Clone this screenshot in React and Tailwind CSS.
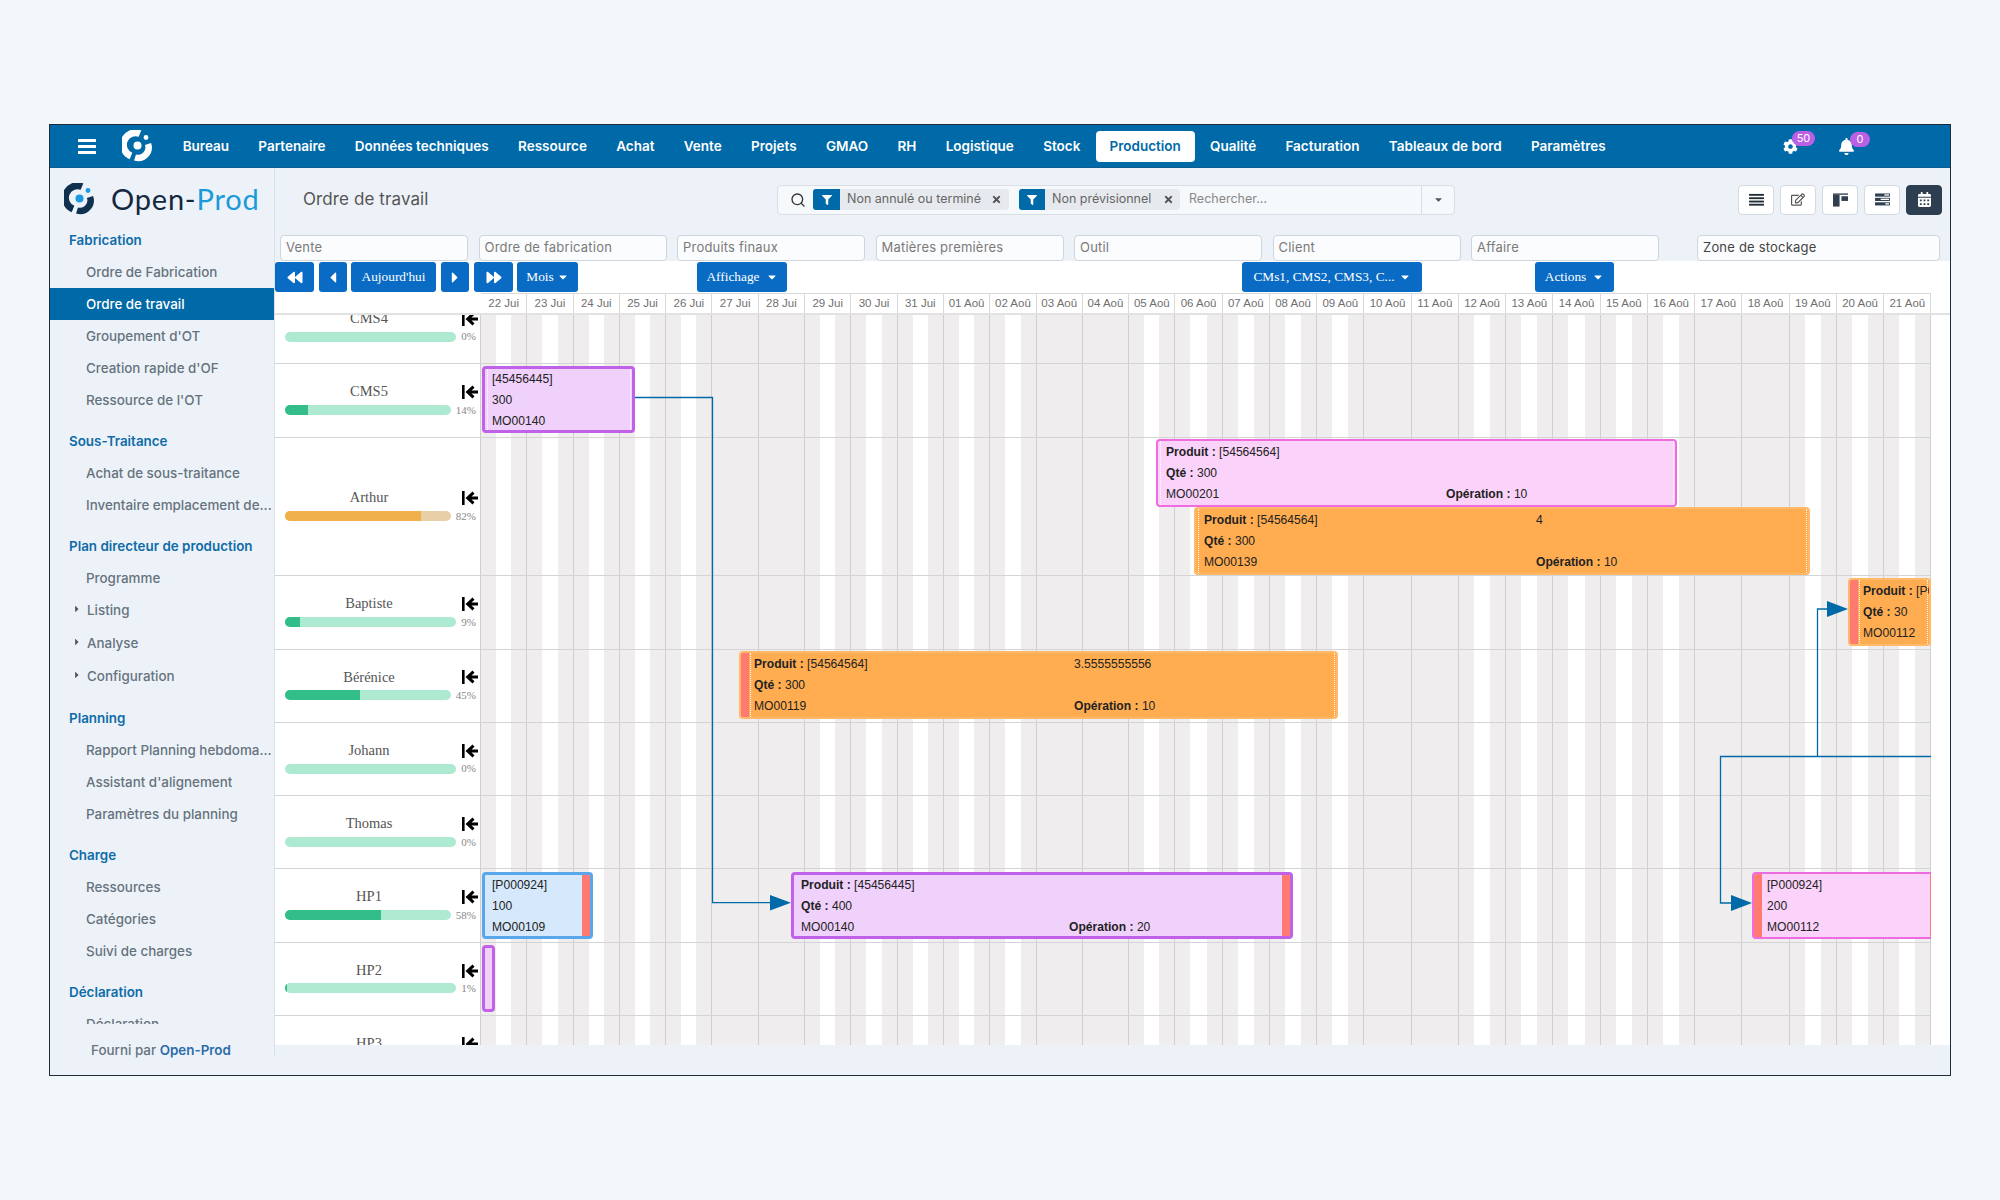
import { FaBackward, FaBell, FaCalendarAlt, FaCaretDown, FaCaretLeft, FaCaretRight, FaCog, FaFilter, FaForward, FaRegEdit, FaTimes } from "react-icons/fa";
import { Search } from "lucide-react";

const NAV = [
  "Bureau", "Partenaire", "Données techniques", "Ressource", "Achat", "Vente", "Projets", "GMAO", "RH",
  "Logistique", "Stock", "Production", "Qualité", "Facturation", "Tableaux de bord", "Paramètres",
];

const MENU = [
  { title: "Fabrication", items: ["Ordre de Fabrication", "Ordre de travail", "Groupement d'OT", "Creation rapide d'OF", "Ressource de l'OT"] },
  { title: "Sous-Traitance", items: ["Achat de sous-traitance", "Inventaire emplacement de..."] },
  { title: "Plan directeur de production", items: ["Programme", ">Listing", ">Analyse", ">Configuration"] },
  { title: "Planning", items: ["Rapport Planning hebdoma...", "Assistant d'alignement", "Paramètres du planning"] },
  { title: "Charge", items: ["Ressources", "Catégories", "Suivi de charges"] },
  { title: "Déclaration", items: ["Déclaration"] },
];

const FILTERS = ["Vente", "Ordre de fabrication", "Produits finaux", "Matières premières", "Outil", "Client", "Affaire"];

const DAYS = [
  "22 Jui", "23 Jui", "24 Jui", "25 Jui", "26 Jui", "27 Jui", "28 Jui", "29 Jui", "30 Jui", "31 Jui",
  "01 Aoû", "02 Aoû", "03 Aoû", "04 Aoû", "05 Aoû", "06 Aoû", "07 Aoû", "08 Aoû", "09 Aoû", "10 Aoû", "11 Aoû",
  "12 Aoû", "13 Aoû", "14 Aoû", "15 Aoû", "16 Aoû", "17 Aoû", "18 Aoû", "19 Aoû", "20 Aoû", "21 Aoû",
];
const WEEKEND = [5, 6, 12, 13, 19, 20, 26, 27];
const DAY_GRID = "grid grid-cols-[repeat(15,46.3px)_repeat(16,47.25px)]";

const ROWS = [
  { name: "CMS4", pct: 0 },
  { name: "CMS5", pct: 14 },
  { name: "Arthur", pct: 82, tall: true, warn: true },
  { name: "Baptiste", pct: 9 },
  { name: "Bérénice", pct: 45 },
  { name: "Johann", pct: 0 },
  { name: "Thomas", pct: 0 },
  { name: "HP1", pct: 58 },
  { name: "HP2", pct: 1 },
  { name: "HP3", pct: 0 },
];

const PURPLE = "bg-[#f0d1fb] border-[3px] border-[#c160e8]";
const PINK = "bg-[#fbd3fa] border-2 border-[#ee6be0]";
const ORANGE = "bg-[#ffad50] border-2 border-[#ffb968]";
const BLUE = "bg-[#d6e9fc] border-[3px] border-[#5aa6ea]";

const BARS = [
  { pos: "left-[1px] top-[76px] w-[153px] h-[67px]", tone: PURPLE, text: "pl-[7px] -mt-[1px]", lines: [["[45456445]"], ["300"], ["MO00140"]], dotted: true },
  {
    pos: "left-[675px] top-[149px] w-[521px] h-[68px]", tone: PINK, text: "pl-[8px]", col: "w-[280px]", dotted: true,
    lines: [[<><b>Produit :</b> [54564564]</>], [<><b>Qté :</b> 300</>], ["MO00201", <><b>Opération :</b> 10</>]],
  },
  {
    pos: "left-[713px] top-[217px] w-[616px] h-[68px]", tone: ORANGE, text: "pl-[8px]", col: "w-[332px]", dotted: true,
    lines: [[<><b>Produit :</b> [54564564]</>, "4"], [<><b>Qté :</b> 300</>], ["MO00139", <><b>Opération :</b> 10</>]],
  },
  {
    pos: "left-[1367px] top-[288px] w-[83px] h-[68px]", tone: ORANGE, text: "pl-[13px]", band: "left", dotted: true,
    lines: [[<><b>Produit :</b> [P000924]</>], [<><b>Qté :</b> 30</>], ["MO00112"]],
  },
  {
    pos: "left-[258px] top-[361px] w-[599px] h-[68px]", tone: ORANGE, text: "pl-[13px]", col: "w-[320px]", band: "left", dotted: true,
    lines: [[<><b>Produit :</b> [54564564]</>, "3.5555555556"], [<><b>Qté :</b> 300</>], ["MO00119", <><b>Opération :</b> 10</>]],
  },
  { pos: "left-[1px] top-[582px] w-[111px] h-[67px]", tone: BLUE, text: "pl-[7px] -mt-[1px]", band: "right", lines: [["[P000924]"], ["100"], ["MO00109"]] },
  {
    pos: "left-[310px] top-[582px] w-[502px] h-[67px]", tone: PURPLE, text: "pl-[7px] -mt-[1px]", col: "w-[268px]", band: "right",
    lines: [[<><b>Produit :</b> [45456445]</>], [<><b>Qté :</b> 400</>], ["MO00140", <><b>Opération :</b> 20</>]],
  },
  { pos: "left-[1271px] top-[582px] w-[188px] h-[67px]", tone: PINK, text: "pl-[13px]", band: "both", lines: [["[P000924]"], ["200"], ["MO00112"]] },
  { pos: "left-[1px] top-[655px] w-[13px] h-[67px]", tone: PURPLE, lines: [] },
];

function Logo({ main, accent, className }) {
  return (
    <svg viewBox="0 0 32 32" className={className} fill="none">
      <path d="M18 3.6A12 12 0 0 0 9 26" stroke={main} strokeWidth="7" />
      <path d="M26 14A10.5 10.5 0 0 1 13 27.5" stroke={main} strokeWidth="6.5" />
      <circle cx="15.5" cy="15.5" r="4" fill={accent} />
      <circle cx="24" cy="7.5" r="2.4" fill={accent} />
    </svg>
  );
}

function SideMenu() {
  return (
    <aside className="w-[225px] h-[888px] shrink-0 border-r border-[#d9e1e9] flex flex-col">
      <div className="h-[56px] shrink-0 flex items-center pl-[14px] pt-[5px]">
        <Logo main="#10304f" accent="#1a9be0" className="w-[32px] h-[32px]" />
        <span className="ml-[15px] font-['Lato',sans-serif] text-[29px] tracking-[0.8px] text-[#13283f]">
          Open-<span className="text-[#1a9bd8]">Prod</span>
        </span>
      </div>
      <nav className="h-[800px] shrink-0 overflow-hidden">
        {MENU.map((sec, i) => (
          <div key={sec.title} className={i ? "mt-[9px]" : ""}>
            <div className="h-[32px] flex items-center pl-[19px] text-[13.4px] font-semibold text-[#0f6ca8]">{sec.title}</div>
            {sec.items.map((it) =>
              it[0] === ">" ? (
                <div key={it} className="h-[33px] flex items-center pl-[23px] text-[13.4px] font-medium text-[#66727e]">
                  <FaCaretRight className="w-[8px] h-[10px] -mt-[4px] mr-[6px] text-[#555]" />
                  {it.slice(1)}
                </div>
              ) : (
                <div
                  key={it}
                  className={`h-[32px] flex items-center pl-[36px] text-[13.4px] font-medium whitespace-nowrap ${
                    it === "Ordre de travail" ? "bg-[#0069a8] text-white" : "text-[#66727e]"
                  }`}
                >
                  {it}
                </div>
              )
            )}
          </div>
        ))}
      </nav>
      <div className="pl-[41px] pt-[16px] text-[13.4px] font-medium text-[#66727e]">
        Fourni par <span className="font-semibold text-[#2b6cab]">Open-Prod</span>
      </div>
    </aside>
  );
}

function ViewBtn({ dark, children }) {
  return (
    <button className={`w-[36px] h-[30px] rounded-[4px] border flex items-center justify-center ${dark ? "bg-[#2c3e50] border-[#2c3e50] text-white" : "bg-white border-[#d5dae0] text-[#2f3f50]"}`}>
      {children}
    </button>
  );
}

function TopRow() {
  return (
    <div className="h-[67px] shrink-0 flex items-center pl-[28px] pr-[8px] pb-[4px]">
      <div className="w-[474px] shrink-0 text-[17px] text-[#555] tracking-[0.1px]">Ordre de travail</div>
      <div className="w-[678px] h-[30px] shrink-0 flex items-center rounded-[4px] border border-[#d9dee5] bg-[#f6f9fc] text-[12.5px]">
        <Search className="w-[16px] h-[16px] ml-[12px] mr-[7px] text-[#333]" strokeWidth={2} />
        <div className="w-[196px] h-[21px] flex items-center rounded-[3px] bg-[#e6eaee] text-[#666] overflow-hidden">
          <span className="w-[27px] h-full bg-[#0069a8] flex items-center justify-center"><FaFilter className="w-[10px] h-[10px] text-white" /></span>
          <span className="ml-[7px] flex-1">Non annulé ou terminé</span>
          <FaTimes className="w-[11px] h-[11px] mr-[7px] text-[#555]" />
        </div>
        <div className="ml-[10px] w-[161px] h-[21px] flex items-center rounded-[3px] bg-[#e6eaee] text-[#666] overflow-hidden">
          <span className="w-[26px] h-full bg-[#0069a8] flex items-center justify-center"><FaFilter className="w-[10px] h-[10px] text-white" /></span>
          <span className="ml-[7px] flex-1">Non prévisionnel</span>
          <FaTimes className="w-[11px] h-[11px] mr-[6px] text-[#555]" />
        </div>
        <span className="ml-[9px] flex-1 text-[#888]">Rechercher...</span>
        <span className="w-[33px] h-full border-l border-[#d9dee5] flex items-center justify-center"><FaCaretDown className="w-[11px] h-[11px] text-[#555]" /></span>
      </div>
      <div className="ml-auto flex gap-[6px]">
        <ViewBtn>
          <svg viewBox="0 0 16 14" className="w-[15px] h-[13px]" fill="#1f2d3a"><rect y="1" width="16" height="2" /><rect y="4.6" width="16" height="2" /><rect y="8.2" width="16" height="2" /><rect y="11.6" width="16" height="2" /></svg>
        </ViewBtn>
        <ViewBtn><FaRegEdit className="w-[14px] h-[13px] text-[#555]" /></ViewBtn>
        <ViewBtn>
          <svg viewBox="0 0 16 14" className="w-[15px] h-[14px]" fill="#2f3f50"><rect y="0" width="16" height="1.4" /><rect y="1.4" width="7" height="12.6" /><rect x="9" y="3" width="7" height="5" /></svg>
        </ViewBtn>
        <ViewBtn>
          <svg viewBox="0 0 16 14" className="w-[15px] h-[13px]" fill="#2f3f50"><rect y="0.5" width="16" height="3.4" /><rect y="5.2" width="16" height="3.4" /><rect y="10" width="16" height="3.4" /><rect x="10" y="1.4" width="5" height="1.4" fill="#fff" /><rect x="6" y="6.1" width="9" height="1.4" fill="#fff" /><rect x="11" y="11" width="4" height="1.4" fill="#fff" /></svg>
        </ViewBtn>
        <ViewBtn dark><FaCalendarAlt className="w-[13px] h-[15px]" /></ViewBtn>
      </div>
    </div>
  );
}

function FilterRow() {
  return (
    <div className="h-[26px] shrink-0 flex pl-[5px] pr-[10px] font-['Inter',sans-serif] text-[13px] text-[#7a7a7a] tracking-[0.2px]">
      {FILTERS.map((f) => (
        <div key={f} className="w-[188px] mr-[10.5px] h-full rounded-[4px] border border-[#cfd5dc] bg-[#fbfcfd] flex items-center pl-[5px] pb-[1px]">{f}</div>
      ))}
      <div className="ml-[27.5px] flex-1 h-full rounded-[4px] border border-[#cfd5dc] bg-[#fbfcfd] flex items-center pl-[5px] pb-[1px] text-[#444]">Zone de stockage</div>
    </div>
  );
}

function TBtn({ className, children }) {
  return (
    <button className={`h-[30px] shrink-0 rounded-[3px] bg-[#0a6bc4] text-white flex items-center justify-center font-['Liberation_Serif',serif] text-[13.33px] ${className}`}>
      {children}
    </button>
  );
}

function Toolbar() {
  return (
    <div className="h-[32px] shrink-0 bg-white flex pt-[1px]">
      <TBtn className="w-[39px]"><FaBackward className="w-[18px] h-[15px]" /></TBtn>
      <TBtn className="w-[28px] ml-[5px]"><FaCaretLeft className="w-[16px] h-[17px]" /></TBtn>
      <TBtn className="w-[85px] ml-[4px]">Aujourd'hui</TBtn>
      <TBtn className="w-[28px] ml-[5px]"><FaCaretRight className="w-[16px] h-[17px]" /></TBtn>
      <TBtn className="w-[39px] ml-[5px]"><FaForward className="w-[18px] h-[15px]" /></TBtn>
      <TBtn className="w-[61px] ml-[4px] gap-[3px]">Mois <FaCaretDown className="w-[12px] h-[12px]" /></TBtn>
      <TBtn className="w-[90px] ml-[119px] gap-[6px]">Affichage <FaCaretDown className="w-[12px] h-[12px]" /></TBtn>
      <TBtn className="w-[180px] ml-[455px] gap-[4px]">CMs1, CMS2, CMS3, C... <FaCaretDown className="w-[12px] h-[12px]" /></TBtn>
      <TBtn className="w-[79px] ml-[113px] gap-[6px]">Actions <FaCaretDown className="w-[12px] h-[12px]" /></TBtn>
    </div>
  );
}

function DateHeader() {
  return (
    <div className="h-[22px] shrink-0 bg-white flex">
      <div className="w-[206px] shrink-0 border-b-2 border-[#e2e2e2]" />
      <div className={`${DAY_GRID} border-t border-b-2 border-t-[#d9d9d9] border-b-[#e2e2e2]`}>
        {DAYS.map((d) => (
          <div key={d} className="border-r border-[#d9d9d9] flex items-center justify-center font-['Liberation_Sans',sans-serif] text-[11.5px] text-[#6f6f6f] whitespace-nowrap">{d}</div>
        ))}
      </div>
      <div className="flex-1 border-b-2 border-[#e2e2e2]" />
    </div>
  );
}

function ResourceRow({ name, pct, tall, warn }) {
  return (
    <div className={`relative flex border-b border-[#d4d4d4] ${tall ? "h-[138.7px]" : "h-[73.3px]"}`}>
      <div className="w-[206px] shrink-0 bg-white border-r border-[#cfcfcf] flex flex-col justify-center pl-[10px] pr-[2px] font-['Liberation_Serif',serif]">
        <div className="flex items-center h-[19px]">
          <span className="w-[168px] shrink-0 text-center text-[14.5px] text-[#555]">{name}</span>
          <svg viewBox="0 0 16 14" className="ml-[9px] w-[16px] h-[14px] shrink-0" fill="#000">
            <rect x="0" y="0" width="2.6" height="14" />
            <path d="M10.5 0.5 3.5 7l7 6.5 2-2.2-3-2.8h6.5V5.5H9.5l3-2.8z" />
          </svg>
        </div>
        <div className="flex items-center gap-[5px] pr-[2px]">
          <div className={`flex-1 h-[10px] rounded-full overflow-hidden ${warn ? "bg-[#e8cfa8]" : "bg-[#aee9d1]"}`}>
            <div className={`h-full ${warn ? "bg-[#f0b04c]" : "bg-[#33bd88]"}`} style={{ width: `${pct}%` }} />
          </div>
          <span className="text-[11px] text-[#888]">{pct}%</span>
        </div>
      </div>
      <div className="flex-1" />
    </div>
  );
}

function Bar({ pos, tone, text, col, band, dotted, lines }) {
  const left = band === "left" || band === "both";
  const right = band === "right" || band === "both";
  return (
    <div className={`absolute ${pos} ${tone} rounded-[4px] overflow-hidden font-['Liberation_Sans',sans-serif] text-[12.1px] text-[#222]`}>
      {left && <div className="absolute left-0 top-0 bottom-0 w-[8px] bg-[#ff7b72]" />}
      {right && <div className="absolute right-0 top-0 bottom-0 w-[8px] bg-[#ff7b72]" />}
      {dotted && <div className={`absolute top-0 bottom-0 border-l border-dotted border-white ${left ? "left-[9px]" : "left-[2px]"}`} />}
      {dotted && <div className="absolute top-0 bottom-0 right-[1px] border-l border-dotted border-white" />}
      <div className={`relative whitespace-nowrap ${text || ""}`}>
        {lines.map((l, i) => (
          <div key={i} className="h-[21.3px] flex items-center">
            <span className={col || ""}>{l[0]}</span>
            {l[1] && <span>{l[1]}</span>}
          </div>
        ))}
      </div>
    </div>
  );
}

function Links() {
  return (
    <svg className="absolute left-0 top-0 w-[1450px] h-[798px]" fill="none">
      <path d="M154 107.5H231.5V612.7H290M1450 466.5H1239.5V613H1250M1336.5 466.5V319H1346" stroke="#0069a8" strokeWidth="1.3" />
      <path d="M289 605 310 612.7 289 620.5ZM1250 605 1271 613 1250 621ZM1346 311 1367 319 1346 327Z" fill="#0069a8" />
    </svg>
  );
}

function Planner() {
  return (
    <div className="h-[730px] shrink-0 overflow-hidden bg-white">
      <div className="relative w-[1656px] -mt-[24px]">
        <div className={`${DAY_GRID} absolute left-[206px] top-0 bottom-0`}>
          {DAYS.map((d, i) => (
            <div key={d} className={`border-r border-[#cfcfcf] bg-[#efeded] ${WEEKEND.includes(i) ? "" : "px-[15px]"}`}>
              {!WEEKEND.includes(i) && <div className="h-full bg-white" />}
            </div>
          ))}
        </div>
        {ROWS.map((r) => <ResourceRow key={r.name} {...r} />)}
        <div className="absolute left-[206px] -top-[1px] w-[1450px] bottom-0 overflow-hidden">
          {BARS.map((b, i) => <Bar key={i} {...b} />)}
          <Links />
        </div>
      </div>
    </div>
  );
}

export default function App() {
  return (
    <div className="h-[1200px] bg-[#f2f7fb] pt-[124px] pl-[49px] font-['Inter',sans-serif]">
      <div className="w-[1902px] h-[952px] border border-[#1f2d3a] bg-[#edf2f8] flex flex-col overflow-hidden">
        <header className="h-[43px] shrink-0 bg-[#0069a8] flex items-center text-white border-b border-[#0b5c8f]">
          <svg viewBox="0 0 18 15" className="ml-[28px] w-[18px] h-[15px]" fill="#fff"><rect width="18" height="3" rx="0.5" /><rect y="6" width="18" height="3" rx="0.5" /><rect y="12" width="18" height="3" rx="0.5" /></svg>
          <Logo main="#fff" accent="#fff" className="ml-[26px] w-[32px] h-[32px]" />
          <nav className="ml-[14px] flex items-center">
            {NAV.map((n) => (
              <div key={n} className={`h-[31px] flex items-center text-[13.5px] font-semibold whitespace-nowrap ${n === "Production" ? "bg-white text-[#0069a8] rounded-[4px] px-[14px] mx-[0.5px]" : "px-[14.67px]"}`}>{n}</div>
            ))}
          </nav>
          <div className="ml-auto mr-[95px] flex items-center">
            <div className="relative">
              <FaCog className="w-[15px] h-[15px]" />
              <span className="absolute left-[9px] -top-[8px] w-[23px] h-[15px] rounded-full bg-[#bb5fe6] text-[11px] leading-[15px] text-center">50</span>
            </div>
            <div className="relative ml-[40px]">
              <FaBell className="w-[17px] h-[17px]" />
              <span className="absolute left-[12px] -top-[6px] w-[20px] h-[15px] rounded-full bg-[#bb5fe6] text-[11px] leading-[15px] text-center">0</span>
            </div>
          </div>
        </header>
        <div className="flex flex-1">
          <SideMenu />
          <main className="flex-1 flex flex-col">
            <TopRow />
            <FilterRow />
            <Toolbar />
            <DateHeader />
            <Planner />
          </main>
        </div>
      </div>
    </div>
  );
}
